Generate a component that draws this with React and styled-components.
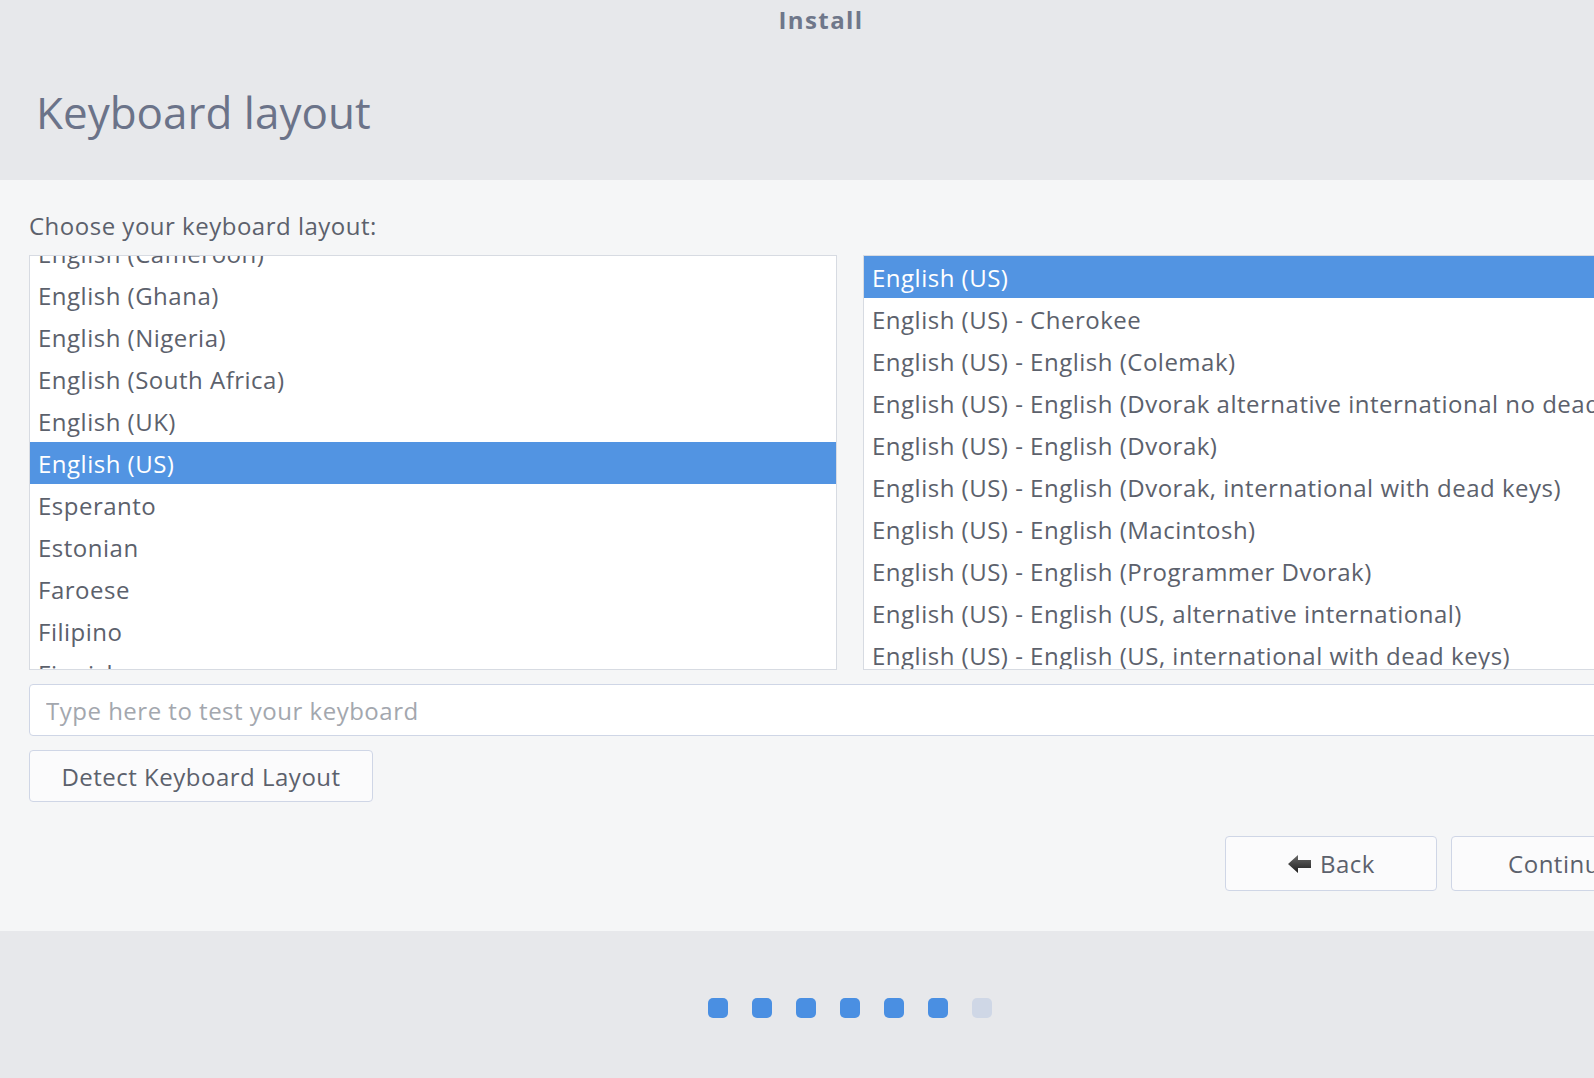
import React, { useLayoutEffect, useRef } from 'react';
import styled, { createGlobalStyle } from 'styled-components';

const Global = createGlobalStyle`
    html, body {
        margin: 0;
        padding: 0;
        overflow: hidden;
        background: #e7e8eb;
    }
    * {
        box-sizing: border-box;
    }
`;

const Window = styled.div`
    width: 1700px;
    height: 1078px;
    display: flex;
    flex-direction: column;
    font-family: "Open Sans", "Noto Sans", sans-serif;
    color: #5c616c;
    background: #e7e8eb;
`;

const Header = styled.div`
    height: 180px;
    display: flex;
    flex-direction: column;
`;

const TitleBar = styled.div`
    height: 38px;
    padding-right: 58px;
    display: flex;
    align-items: center;
    justify-content: center;
    font-size: 24px;
    font-weight: 700;
    letter-spacing: 1.4px;
    color: #6f778a;
`;

const PageTitle = styled.h1`
    margin: 0;
    padding: 52px 0 0 36px;
    font-size: 44px;
    font-weight: 400;
    line-height: 1;
    color: #6b7389;
`;

const Content = styled.div`
    height: 751px;
    background: #f5f6f7;
    padding: 28px 29px 0 29px;
    display: flex;
    flex-direction: column;
    letter-spacing: 0.5px;
`;

const Label = styled.div`
    font-size: 24px;
    line-height: 36px;
    margin-bottom: 11px;
`;

const Lists = styled.div`
    display: flex;
    gap: 26px;
    height: 415px;
`;

const ListBox = styled.div`
    flex: 1;
    background: #ffffff;
    border: 1px solid #d7dbe2;
    overflow-y: auto;
    scrollbar-width: none;
    &::-webkit-scrollbar {
        display: none;
    }
`;

const Row = styled.div`
    height: 42px;
    padding-left: ${p => p.$inset}px;
    display: flex;
    align-items: center;
    font-size: 24px;
    white-space: nowrap;
    background: ${p => (p.$selected ? '#5294e2' : 'transparent')};
    color: ${p => (p.$selected ? '#ffffff' : '#5c616c')};
`;

const TestInput = styled.input`
    margin-top: 14px;
    height: 52px;
    width: 100%;
    border: 1px solid #cfd6e6;
    border-radius: 4px;
    background: #ffffff;
    padding: 0 16px;
    font-family: inherit;
    font-size: 24px;
    letter-spacing: inherit;
    color: #5c616c;
    outline: none;
    &::placeholder {
        color: #a3a7ae;
    }
`;

const Button = styled.button`
    height: ${p => p.$height || 52}px;
    width: ${p => p.$width}px;
    border: 1px solid #cfd6e6;
    border-radius: 4px;
    background: #fbfbfc;
    font-family: inherit;
    font-size: 24px;
    letter-spacing: 0.5px;
    color: #5c616c;
    display: flex;
    align-items: center;
    justify-content: center;
    gap: 7px;
    padding: 0;
`;

const DetectRow = styled.div`
    margin-top: 14px;
    display: flex;
`;

const NavRow = styled.div`
    margin-top: 34px;
    display: flex;
    justify-content: flex-end;
    gap: 14px;
`;

const Footer = styled.div`
    flex: 1;
    display: flex;
    justify-content: center;
    align-items: center;
    gap: 24px;
    padding-top: 6px;
`;

const Dot = styled.div`
    width: 20px;
    height: 20px;
    border-radius: 5px;
    background: ${p => (p.$done ? '#4a8fe2' : '#cfd7e6')};
`;

const BackArrow = () => (
    <svg width="26" height="22" viewBox="0 0 26 22">
        <defs>
            <linearGradient id="ag" x1="0" y1="0" x2="0" y2="1">
                <stop offset="0" stopColor="#6a6a6a" />
                <stop offset="1" stopColor="#1e1e1e" />
            </linearGradient>
        </defs>
        <path d="M1 11 L11 2 L11 7 L24 7 L24 15 L11 15 L11 20 Z" fill="url(#ag)" />
    </svg>
);

const layouts = [
    'Dzongkha',
    'English (Australian)',
    'English (Cameroon)',
    'English (Ghana)',
    'English (Nigeria)',
    'English (South Africa)',
    'English (UK)',
    'English (US)',
    'Esperanto',
    'Estonian',
    'Faroese',
    'Filipino',
    'Finnish',
    'French',
    'Georgian',
];

const variants = [
    'English (US)',
    'English (US) - Cherokee',
    'English (US) - English (Colemak)',
    'English (US) - English (Dvorak alternative international no dead keys)',
    'English (US) - English (Dvorak)',
    'English (US) - English (Dvorak, international with dead keys)',
    'English (US) - English (Macintosh)',
    'English (US) - English (Programmer Dvorak)',
    'English (US) - English (US, alternative international)',
    'English (US) - English (US, international with dead keys)',
    'English (US) - English (international AltGr dead keys)',
];

const App = () => {
    const leftRef = useRef(null);

    useLayoutEffect(() => {
        // keep "English (Ghana)" 18px below the top edge, as in the installer
        if (leftRef.current) leftRef.current.scrollTop = 3 * 42 - 18;
    }, []);

    return (
        <Window>
            <Global />
            <Header>
                <TitleBar>Install</TitleBar>
                <PageTitle>Keyboard layout</PageTitle>
            </Header>
            <Content>
                <Label>Choose your keyboard layout:</Label>
                <Lists>
                    <ListBox ref={leftRef}>
                        {layouts.map(name => (
                            <Row key={name} $inset={8} $selected={name === 'English (US)'}>
                                {name}
                            </Row>
                        ))}
                    </ListBox>
                    <ListBox>
                        {variants.map((name, i) => (
                            <Row key={name} $inset={8} $selected={i === 0}>
                                {name}
                            </Row>
                        ))}
                    </ListBox>
                </Lists>
                <TestInput placeholder="Type here to test your keyboard" />
                <DetectRow>
                    <Button $width={344}>Detect Keyboard Layout</Button>
                </DetectRow>
                <NavRow>
                    <Button $width={212} $height={55}>
                        <BackArrow />
                        Back
                    </Button>
                    <Button $width={220} $height={55}>Continue</Button>
                </NavRow>
            </Content>
            <Footer>
                {[0, 1, 2, 3, 4, 5, 6].map(i => (
                    <Dot key={i} $done={i < 6} />
                ))}
            </Footer>
        </Window>
    );
};

export default App;
